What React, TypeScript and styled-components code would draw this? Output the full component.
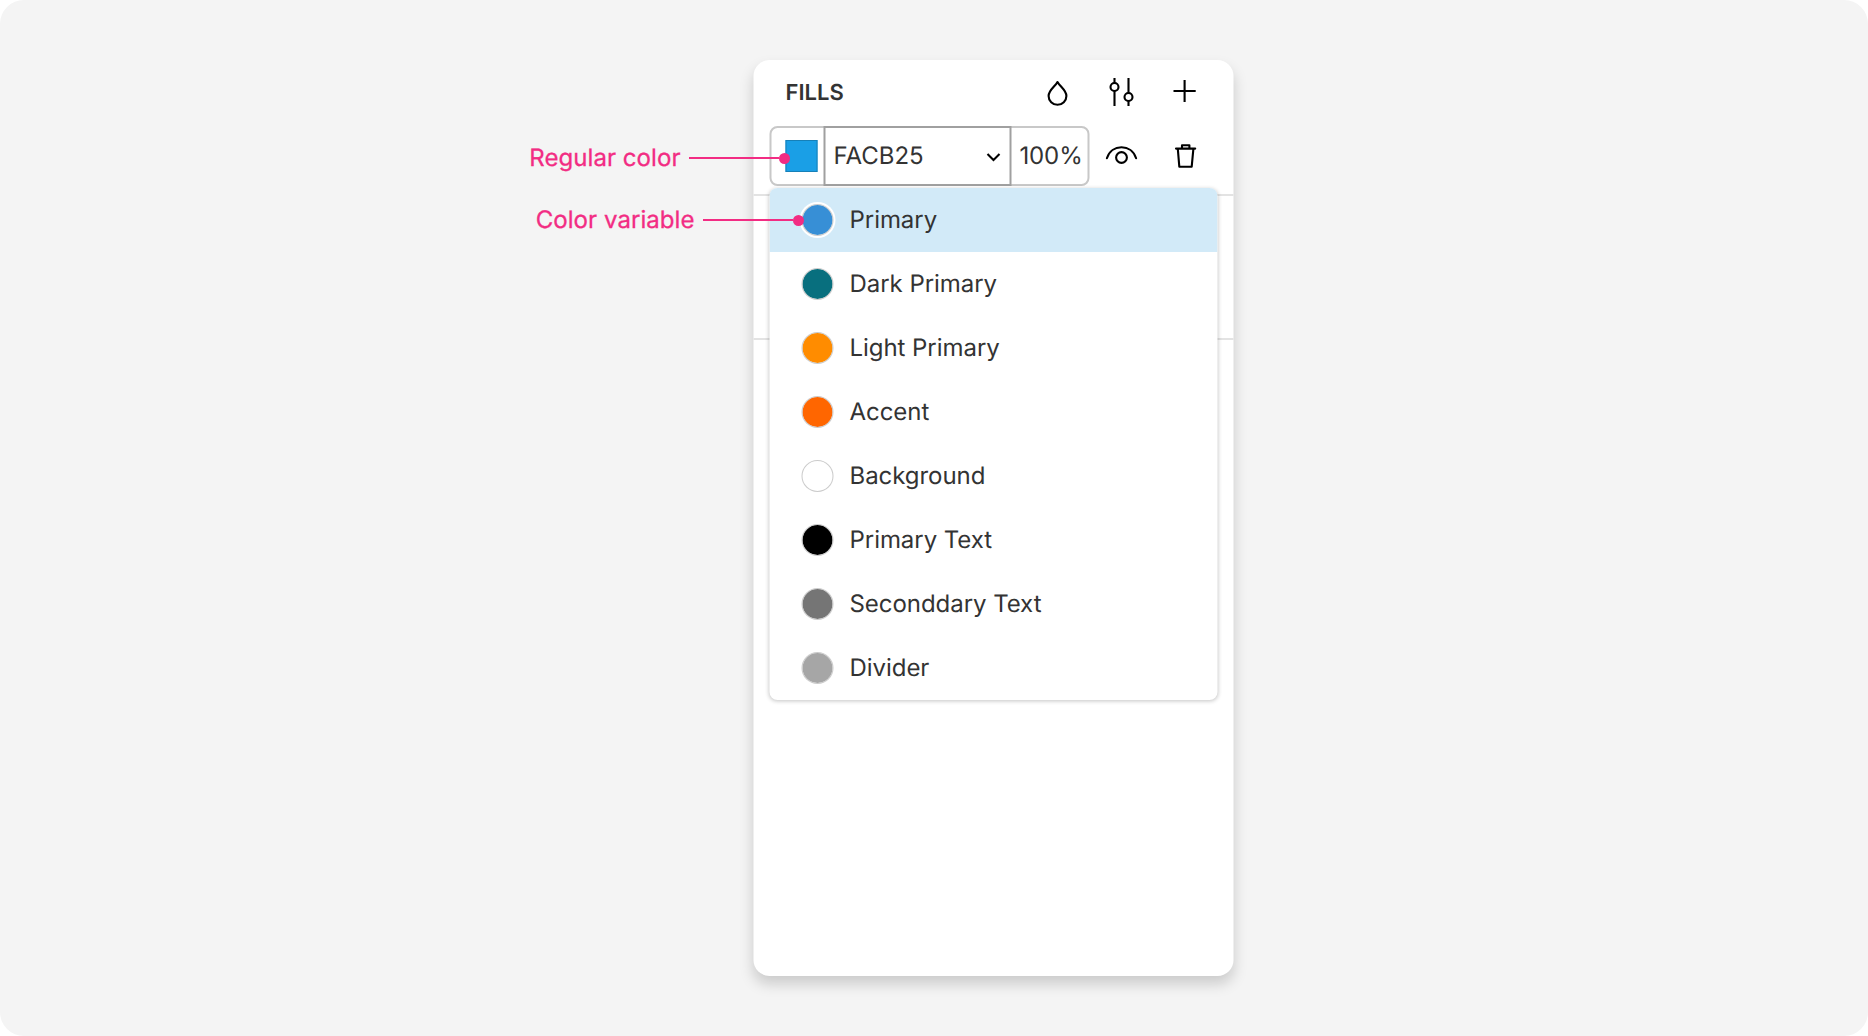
import React from "react";
import styled, { createGlobalStyle } from "styled-components";

const GlobalStyle = createGlobalStyle`
  *, *::before, *::after { box-sizing: border-box; }
  body {
    margin: 0;
    background: #ffffff;
    font-family: Inter, "Liberation Sans", sans-serif;
    color: #333333;
    text-rendering: geometricPrecision;
  }
`;

const Canvas = styled.main`
  position: relative;
  width: 1868px;
  height: 1036px;
  padding: 60px 634px 60px 754px;
  border-radius: 24px;
  background: #f4f4f4;
  overflow: hidden;
`;

const Panel = styled.section`
  width: 480px;
  height: 916px;
  border-radius: 16px;
  background: #ffffff;
  box-shadow: 0 8px 14px rgba(0, 0, 0, 0.17);
  transform: translateX(-0.5px);
`;

const FillsSection = styled.div`
  height: 136px;
  border-bottom: 2px solid #e3e3e3;
`;

const EmptySection = styled.div`
  height: 144px;
  border-bottom: 2px solid #e3e3e3;
`;

const Header = styled.header`
  display: flex;
  align-items: center;
  justify-content: space-between;
  height: 64px;
  padding: 0 32px;
`;

const Title = styled.h2`
  margin: 2px 0 0;
  font-size: 22px;
  line-height: 32px;
  font-weight: 600;
`;

const Actions = styled.div`
  display: flex;
  gap: 32px;
`;

const IconButton = styled.button`
  display: flex;
  width: 32px;
  height: 32px;
  padding: 0;
  border: 0;
  background: none;
  color: #000000;
`;

const Icon = styled.svg`
  display: block;
  flex: none;
  fill: none;
  stroke: currentColor;
  stroke-width: 2.1;
  overflow: visible;
`;

const FillRow = styled.div`
  position: relative;
  display: flex;
  align-items: center;
  height: 64px;
  padding: 0 32px 0 16px;
`;

const InputGroup = styled.div`
  display: flex;
  width: 320px;
  height: 60px;
  border: 2px solid #c8c8c8;
  border-radius: 8px;
`;

const SwatchCell = styled.div`
  display: flex;
  align-items: center;
  width: 52px;
  padding-left: 14px;
`;

const Swatch = styled.span`
  width: 32px;
  height: 32px;
  border: 1px solid #1680b8;
  background: #1a9fe6;
`;

const Select = styled.div`
  display: flex;
  align-items: center;
  justify-content: space-between;
  width: 188px;
  height: 60px;
  margin-top: -2px;
  padding: 0 9px 0 8px;
  border: 2px solid #a0a0a0;
  font-size: 24px;
`;

const Label = styled.span`
  line-height: 30px;
  margin-bottom: 1px;
`;

const Opacity = styled.div`
  display: flex;
  flex: 1;
  align-items: center;
  justify-content: center;
  padding-left: 3px;
  font-size: 24px;
  letter-spacing: -0.1px;
`;

const RowActions = styled.div`
  display: flex;
  gap: 32px;
  margin-left: auto;
`;

const Menu = styled.ul`
  position: absolute;
  top: 64px;
  left: 16px;
  width: 448px;
  margin: 0;
  padding: 0;
  border-radius: 8px;
  background: #ffffff;
  box-shadow: 0 1px 4px rgba(0, 0, 0, 0.24);
  list-style: none;
  overflow: hidden;
`;

const MenuItem = styled.li<{ $active?: boolean }>`
  display: flex;
  align-items: center;
  gap: 16px;
  height: 64px;
  padding-left: 32px;
  background: ${(p) => (p.$active ? "#d2eaf8" : "transparent")};
  font-size: 24px;
  letter-spacing: -0.05px;
`;

const Dot = styled.span<{ $color: string; $active?: boolean }>`
  width: 32px;
  height: 32px;
  border: 1px solid rgba(190, 190, 190, 0.8);
  border-radius: 50%;
  background: ${(p) => p.$color};
  background-clip: padding-box;
  box-shadow: ${(p) => (p.$active ? "0 0 0 2px #ffffff" : "none")};
`;

const Callout = styled.div<{ $top: number; $right: number }>`
  position: absolute;
  top: ${(p) => p.$top}px;
  right: ${(p) => p.$right}px;
  display: flex;
  align-items: center;
  height: 32px;
  color: #f22c83;
  font-size: 24px;
  letter-spacing: 0.06px;
  -webkit-text-stroke: 0.3px currentColor;
  white-space: nowrap;
`;

const Leader = styled.span`
  width: 90px;
  height: 2px;
  margin-left: 8.5px;
  background: currentColor;
`;

const Pin = styled.span`
  width: 11px;
  height: 11px;
  border-radius: 50%;
  background: currentColor;
`;

const variables = [
  { name: "Primary", color: "#378fd6", active: true },
  { name: "Dark Primary", color: "#086f7e" },
  { name: "Light Primary", color: "#ff8c00" },
  { name: "Accent", color: "#ff6600" },
  { name: "Background", color: "#ffffff" },
  { name: "Primary Text", color: "#000000" },
  { name: "Seconddary Text", color: "#757575" },
  { name: "Divider", color: "#a6a6a6" },
];

const DropIcon = () => (
  <Icon width="32" height="32" viewBox="-0.5 0 32 32">
    <path
      d="M15.5 6C13 10.6 6.6 14.2 6.6 19.9a8.9 8.9 0 0 0 17.8 0C24.4 14.2 18 10.6 15.5 6Z"
      strokeLinejoin="round"
    />
  </Icon>
);

const SlidersIcon = () => (
  <Icon width="32" height="32" viewBox="-0.5 0 32 32">
    <path d="M8.5 2V7M8.5 15V30M22.5 2V17M22.5 25V30" />
    <circle cx="8.5" cy="11" r="4" />
    <circle cx="22.5" cy="21" r="4" />
  </Icon>
);

const PlusIcon = () => (
  <Icon width="32" height="32" viewBox="-0.5 0 32 32">
    <path d="M3.5 15H25.7M14.6 4V26" />
  </Icon>
);

const EyeIcon = () => (
  <Icon width="32" height="32" viewBox="-0.5 0 32 32">
    <path
      d="M0.9 18.2C3.2 11 9 7.2 15.5 7.2S27.8 11 30.1 18.2"
      strokeLinecap="round"
    />
    <circle cx="15.5" cy="17.5" r="5.4" />
  </Icon>
);

const TrashIcon = () => (
  <Icon
    width="32"
    height="32"
    viewBox="-0.5 0 32 32"
    strokeLinecap="round"
    strokeLinejoin="round"
  >
    <path d="M6 8.6H25.2M7.8 8.6 9.3 26.7H21.7L23.4 8.6M12 8.6V5.2H19.4V8.6" />
  </Icon>
);

const ChevronIcon = () => (
  <Icon width="14" height="10" viewBox="0 -1 14 10" color="#000">
    <path d="M1 2 7 8 13 2" />
  </Icon>
);

export default function App() {
  return (
    <>
      <GlobalStyle />
      <Canvas>
        <Panel>
          <FillsSection>
            <Header>
              <Title>FILLS</Title>
              <Actions>
                <IconButton aria-label="Color styles"><DropIcon /></IconButton>
                <IconButton aria-label="Adjust"><SlidersIcon /></IconButton>
                <IconButton aria-label="Add fill"><PlusIcon /></IconButton>
              </Actions>
            </Header>
            <FillRow>
              <InputGroup>
                <SwatchCell><Swatch /></SwatchCell>
                <Select>
                  <Label>FACB25</Label>
                  <ChevronIcon />
                </Select>
                <Opacity><Label>100%</Label></Opacity>
              </InputGroup>
              <RowActions>
                <IconButton aria-label="Toggle visibility"><EyeIcon /></IconButton>
                <IconButton aria-label="Delete fill"><TrashIcon /></IconButton>
              </RowActions>
              <Menu>
                {variables.map((v) => (
                  <MenuItem key={v.name} $active={v.active}>
                    <Dot $color={v.color} $active={v.active} />
                    <Label>{v.name}</Label>
                  </MenuItem>
                ))}
              </Menu>
            </FillRow>
          </FillsSection>
          <EmptySection />
        </Panel>
        <Callout $top={142} $right={1078}>
          <Label>Regular color</Label>
          <Leader />
          <Pin />
        </Callout>
        <Callout $top={204} $right={1064}>
          <Label>Color variable</Label>
          <Leader />
          <Pin />
        </Callout>
      </Canvas>
    </>
  );
}
